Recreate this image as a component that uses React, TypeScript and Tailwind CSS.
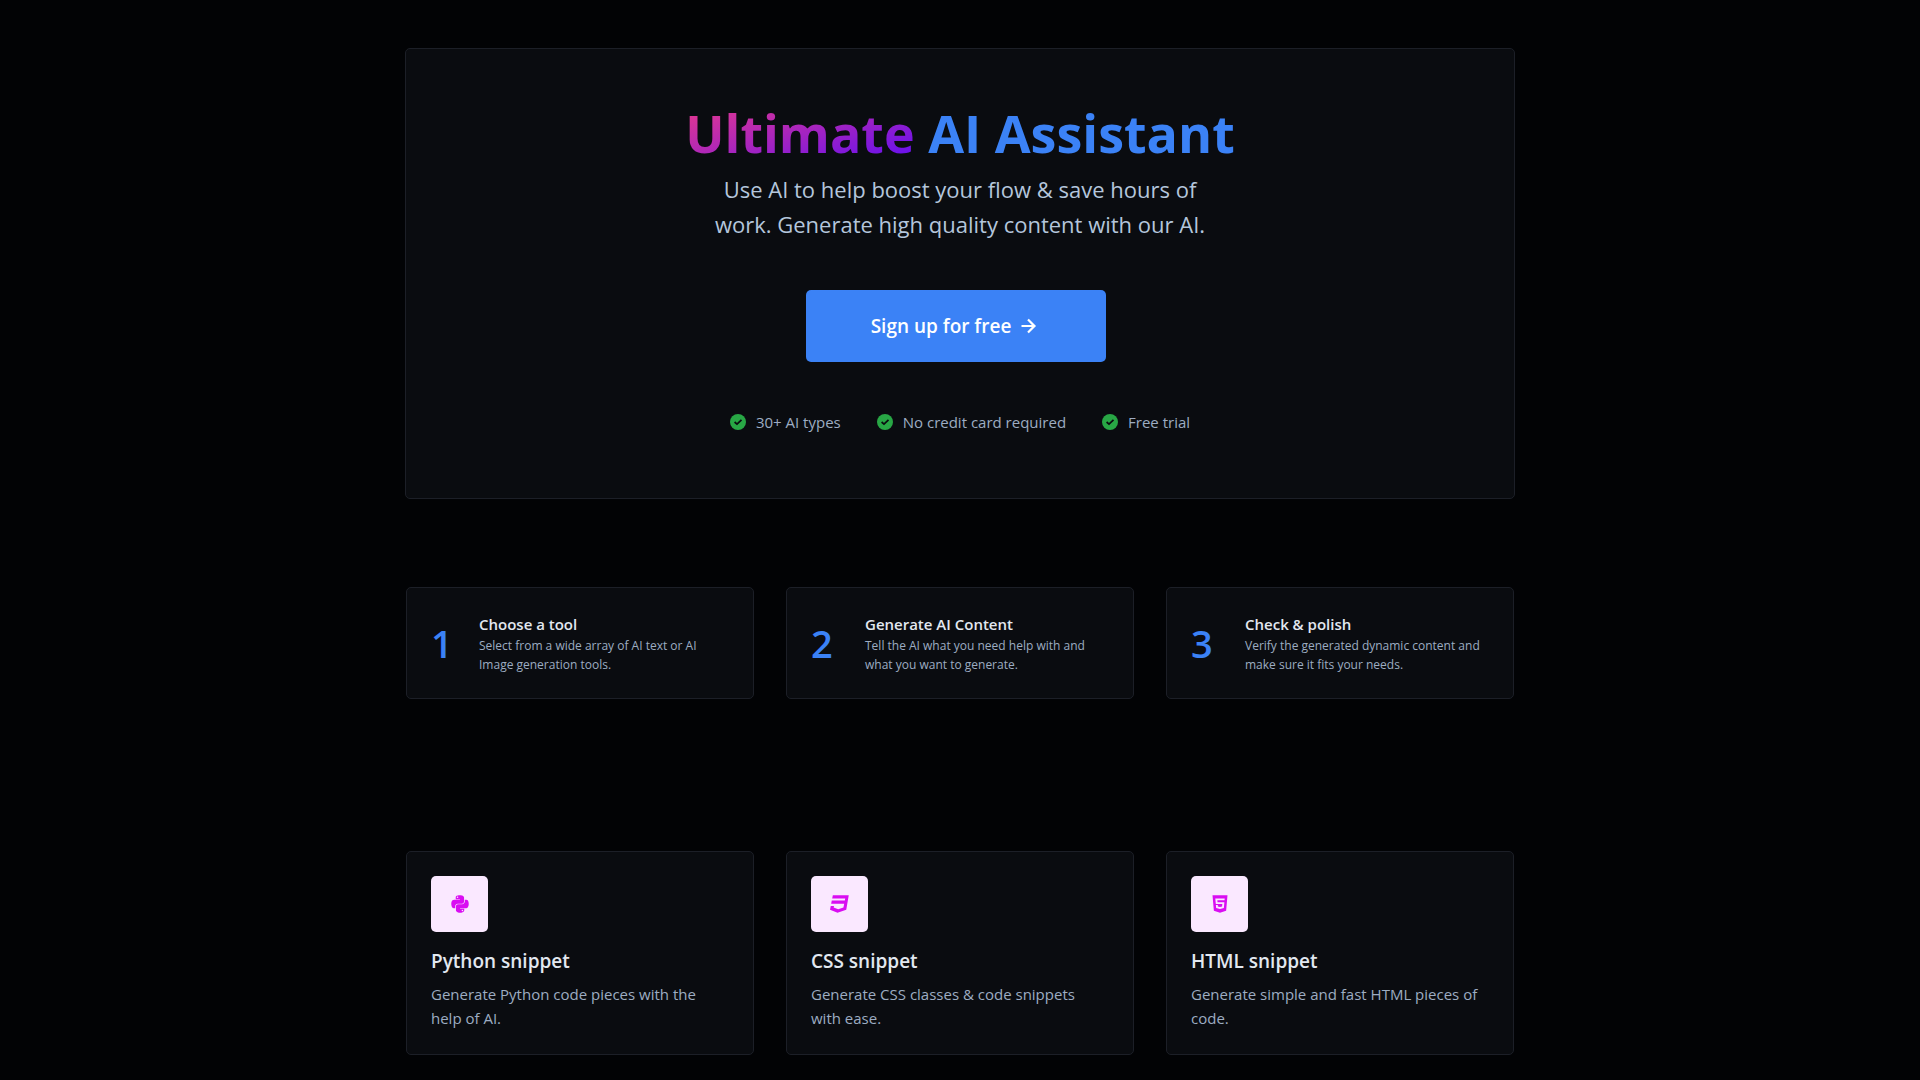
import type { IconType } from "react-icons";
import { FaCss3, FaHtml5, FaPython } from "react-icons/fa";
import { BiRightArrowAlt } from "react-icons/bi";

const perks = ["30+ AI types", "No credit card required", "Free trial"];

const steps = [
  { title: "Choose a tool", text: ["Select from a wide array of AI text or AI", "Image generation tools."], numberWidth: "w-4" },
  { title: "Generate AI Content", text: ["Tell the AI what you need help with and", "what you want to generate."], numberWidth: "w-[22px]" },
  { title: "Check & polish", text: ["Verify the generated dynamic content and", "make sure it fits your needs."], numberWidth: "w-[22px]" },
];

const snippets: { title: string; text: string[]; icon: IconType }[] = [
  { title: "Python snippet", text: ["Generate Python code pieces with the", "help of AI."], icon: FaPython },
  { title: "CSS snippet", text: ["Generate CSS classes & code snippets", "with ease."], icon: FaCss3 },
  { title: "HTML snippet", text: ["Generate simple and fast HTML pieces of", "code."], icon: FaHtml5 },
];

function Lines({ text }: { text: string[] }) {
  return (
    <>
      {text.map((line) => (
        <span key={line} className="block whitespace-nowrap">
          {line}
        </span>
      ))}
    </>
  );
}

function CheckIcon() {
  return (
    <svg viewBox="0 0 16 16" className="size-4" aria-hidden="true">
      <circle cx="8" cy="8" r="8" fill="#28a745" />
      <path d="M4.6 8 7 10.2l4.5-4.4" fill="none" stroke="#0a0c10" strokeWidth="1.7" />
    </svg>
  );
}

export default function App() {
  return (
    <div className="min-h-screen bg-[#020305] pt-12 pb-6 font-['Segoe_UI','Open_Sans',sans-serif]">
      <main className="mx-auto max-w-[1110px]">
        {/* Hero */}
        <section className="flex flex-col items-center rounded-[5px] border border-[#1c1f27] bg-[#0a0c10] pt-[54px] pb-16 text-center">
          <h1 className="text-[52px] leading-[60px] font-bold text-[#3b82f6]">
            <span className="bg-linear-to-br/srgb from-[#f03c86] to-[#5a0cf8] bg-clip-text text-transparent">Ultimate</span> AI Assistant
          </h1>
          <p className="mt-[9px] text-[22px] leading-[35px] text-[#b4c6dc]">
            <Lines text={["Use AI to help boost your flow & save hours of", "work. Generate high quality content with our AI."]} />
          </p>
          <button className="mt-12 mr-2 flex h-[72px] w-[300px] items-center justify-center gap-1 rounded-[5px] bg-[#3b82f6] text-[19px] font-semibold text-white">
            Sign up for free
            <BiRightArrowAlt size={26} />
          </button>
          <ul className="mt-12 flex gap-9 text-[15px] leading-6 text-[#9dacc2]">
            {perks.map((perk) => (
              <li key={perk} className="flex items-center gap-2.5">
                <CheckIcon />
                {perk}
              </li>
            ))}
          </ul>
        </section>

        {/* Steps */}
        <section className="mx-px mt-22 grid grid-cols-3 gap-8">
          {steps.map((step, index) => (
            <div key={step.title} className="flex h-[112px] items-center gap-8 rounded-[5px] border border-[#1c1f27] bg-[#0a0c10] px-6">
              <span className={`${step.numberWidth} text-[38px] leading-[48px] font-semibold text-[#3b82f6]`}>{index + 1}</span>
              <div>
                <h2 className="text-[15px] leading-6 font-semibold text-[#e2e8f0]">{step.title}</h2>
                <p className="text-xs leading-[19px] text-[#9dacc2]">
                  <Lines text={step.text} />
                </p>
              </div>
            </div>
          ))}
        </section>

        {/* Snippets */}
        <section className="mx-px mt-38 grid grid-cols-3 gap-8">
          {snippets.map(({ title, text, icon: Icon }) => (
            <div key={title} className="rounded-[5px] border border-[#1c1f27] bg-[#0a0c10] p-6">
              <div className="flex h-14 w-[57px] items-center justify-center rounded-[5px] bg-[#fae8ff] text-[#d90df2]">
                <Icon size={20} />
              </div>
              <h2 className="mt-[15px] text-[19px] leading-7 font-semibold text-[#e2e8f0]">{title}</h2>
              <p className="mt-[7px] text-[15px] leading-6 text-[#9dacc2]">
                <Lines text={text} />
              </p>
            </div>
          ))}
        </section>
      </main>
    </div>
  );
}
